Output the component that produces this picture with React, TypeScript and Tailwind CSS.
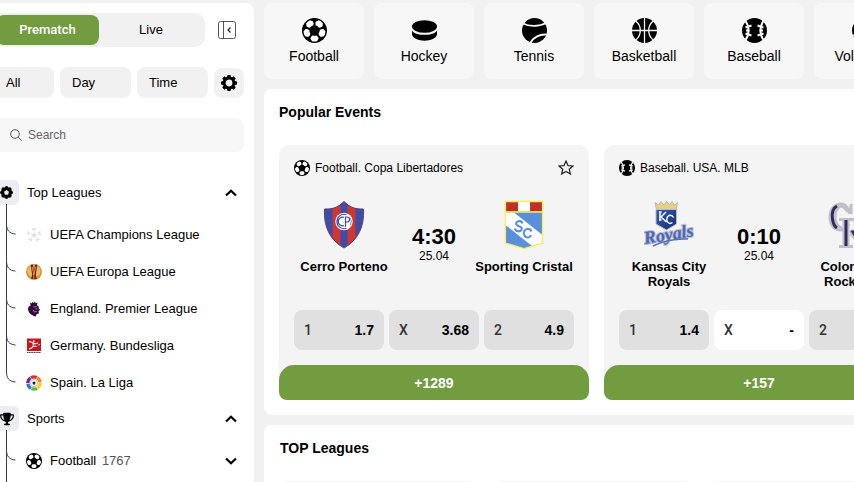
import type { ReactNode } from "react";
import { FaTrophy } from "react-icons/fa6";

type IconProps = { className?: string };

const fifths = [0, 72, 144, 216, 288];
const eighths = [0, 45, 90, 135, 180, 225, 270, 315];

function FootballIcon({ className = "size-[25px]" }: IconProps) {
  return (
    <svg viewBox="0 0 25 25" className={className} aria-hidden="true">
      <circle cx="12.5" cy="12.5" r="12.5" />
      {fifths.map((a) => (
        <path
          key={a}
          transform={`rotate(${a + 36} 12.5 12.5)`}
          d="M10 1.8Q12.5 1 15 1.8L16.6 4.4Q16.4 6.4 14.6 7.6Q12.5 7 10.4 7.6Q8.6 6.4 8.4 4.4Z"
          fill="#fff"
        />
      ))}
    </svg>
  );
}

function HockeyIcon({ className = "size-[25px]" }: IconProps) {
  return (
    <svg viewBox="0 0 25 25" className={className} aria-hidden="true">
      <ellipse cx="12.5" cy="8.5" rx="12.5" ry="6.3" />
      <path d="M0 12.4C1.500 15.400 6.500 16.800 12.500 16.800S23.500 15.400 25 12.400V16.500C24 20.500 18.500 22.700 12.500 22.700S1 20.500 0 16.500Z" />
    </svg>
  );
}

function TennisIcon({ className = "size-[25px]" }: IconProps) {
  return (
    <svg viewBox="0 0 25 25" className={className} aria-hidden="true">
      <circle cx="12.5" cy="12.5" r="12.5" />
      <path
        d="M1 5.500C7 8.800 18 8.500 24 5M8.500 25C10.500 20 17.500 15.800 25 16.600"
        fill="none"
        stroke="#f7f7f7"
        strokeWidth="1.8"
      />
    </svg>
  );
}

function BasketballIcon({ className = "size-[25px]" }: IconProps) {
  return (
    <svg viewBox="0 0 25 25" className={className} aria-hidden="true">
      <circle cx="12.5" cy="12.5" r="12.5" />
      <path
        d="M12.5 0V25M0 12.5H25M3.8 3C9.8 8 9.8 17 3.8 22M21.2 3C15.2 8 15.2 17 21.2 22"
        fill="none"
        stroke="#f7f7f7"
        strokeWidth="1.3"
      />
    </svg>
  );
}

function BaseballIcon({ className = "size-[25px]" }: IconProps) {
  return (
    <svg viewBox="0 0 25 25" className={className} aria-hidden="true">
      <circle cx="12.5" cy="12.5" r="12.5" />
      <g fill="none" stroke="#f7f7f7" strokeWidth="2">
        <path d="M3.5 3C7.500 8.500 7.500 16.500 3.500 22M21.500 3C17.500 8.500 17.500 16.500 21.500 22" />
        <path d="M3.500 9.500L9.500 7.500M4 12.500H7.500M3.500 15.500L9.500 17.500M21.500 9.500L15.500 7.500M21 12.500H17.500M21.500 15.500L15.500 17.500" />
      </g>
    </svg>
  );
}

function VolleyballIcon({ className = "size-[25px]" }: IconProps) {
  return (
    <svg viewBox="0 0 25 25" className={className} aria-hidden="true">
      <circle cx="12.5" cy="12.5" r="12.5" />
      <path
        d="M12.5 12.5C10 8 11 3 15 0M12.5 12.5C17.5 12.5 22 15 23.5 19M12.5 12.5C10 17 5 19 1 17"
        fill="none"
        stroke="#f7f7f7"
        strokeWidth="1.4"
      />
    </svg>
  );
}

function GearIcon() {
  return (
    <svg viewBox="0 0 16 16" className="size-4" aria-hidden="true">
      <circle cx="8" cy="8" r="4.9" fill="none" stroke="#000" strokeWidth="3" />
      {eighths.map((a) => (
        <rect key={a} x="6.2" y="0" width="3.6" height="3.5" rx="0.8" transform={`rotate(${a} 8 8)`} />
      ))}
    </svg>
  );
}

function BadgeIcon() {
  return (
    <svg viewBox="0 0 14 14" className="size-[13px]" aria-hidden="true">
      <circle cx="7" cy="7" r="5.8" />
      {eighths.map((a) => (
        <circle key={a} cx="7" cy="1.9" r="1.9" transform={`rotate(${a} 7 7)`} />
      ))}
      <path d="M7 4.2L9.7 6.2L8.7 9.4H5.3L4.3 6.2Z" fill="#ebedf2" />
    </svg>
  );
}

function Chevron({ down = false }: { down?: boolean }) {
  return (
    <svg viewBox="0 0 12 8" className="h-2 w-3" fill="none" stroke="#000" strokeWidth="2.2" aria-hidden="true">
      <path d={down ? "M1 1.500L6 6.300L11 1.500" : "M1 6.500L6 1.700L11 6.500"} />
    </svg>
  );
}

function ChampionsIcon() {
  return (
    <svg viewBox="0 0 16 16" className="size-4" fill="#dedede" aria-hidden="true">
      <path d="M8 5l.9 1.900 2.100.2-1.600 1.400.5 2.100L8 9.500l-1.900 1.100.5-2.100L5 7.100l2.100-.2z" />
      {fifths.map((a) => (
        <g key={a} transform={`rotate(${a} 8 8)`}>
          <path d="M5.700 .5L8 1.600L10.300 .5L9.300 2.500L10 3.300L8 2.900L6 3.300L6.700 2.500Z" />
          <path d="M7.700 3.300H8.300V5H7.700Z" />
        </g>
      ))}
    </svg>
  );
}

function EuropaIcon() {
  return (
    <svg viewBox="0 0 16 16" className="size-4" aria-hidden="true">
      <circle cx="8" cy="8" r="8" fill="#cf9a3c" />
      <path d="M1.500 6A7 7 0 0 1 5 2L6 13A7 7 0 0 1 1.500 6M14.500 6A7 7 0 0 0 11 2L10 13A7 7 0 0 0 14.500 6" fill="#e9bf66" />
      <path d="M4.800 .8L6.200 10.500L5.200 15H10.800L9.800 10.500L11.200 .8L9.300 .4L8 7L6.700 .4Z" fill="#7d1a12" />
      <path d="M6.300 3L7.800 11L9.700 3M7.800 11V15" fill="none" stroke="#e9c98a" strokeWidth=".7" />
    </svg>
  );
}

function PremierIcon() {
  return (
    <svg viewBox="0 0 16 16" className="size-4" aria-hidden="true">
      <path
        d="M4 1.800L5.600 2.500L6 .8L7.500 2L9 .5L9.700 2.200L11.500 1.500L11 4.300L13 5.700L12.500 7L14 8.800L12.500 10.500L13 12.500L10.800 13L9.500 15.700L6 14L3.500 12.300L2 9L2.300 6L4.500 4.400Z"
        fill="#38063f"
      />
      <path d="M7.500 6L10.500 5.500M9.500 7.700L11.500 8M7 9L8.500 11L10.800 10.500" fill="none" stroke="#fff" strokeWidth=".5" />
    </svg>
  );
}

function BundesligaIcon() {
  return (
    <svg viewBox="0 0 16 16" className="size-4" aria-hidden="true">
      <rect x="1" y="0.500" width="14" height="12.500" fill="#c4161c" />
      <path d="M3 3.500L6.500 4.500L9 6L12 5M7 5L7.500 8L11 8.500M7.500 8L5.500 10L3 11" fill="none" stroke="#fff" strokeWidth="1.100" />
      <circle cx="7.800" cy="3.200" r=".9" fill="#fff" />
      <circle cx="13" cy="6.800" r=".7" fill="#fff" />
      <path d="M1 14.500H15" stroke="#444" strokeWidth="1" strokeDasharray="1.300 .4" />
    </svg>
  );
}

const laLigaColors = ["#f58220", "#fcd116", "#5bb947", "#3f6fd1", "#6b2c91", "#e3263a"];

function LaLigaIcon() {
  return (
    <svg viewBox="0 0 16 16" className="size-4" aria-hidden="true">
      {laLigaColors.map((c, i) => (
        <path
          key={c}
          d="M8 1.800A6.200 6.200 0 0 1 13 4.500"
          fill="none"
          stroke={c}
          strokeWidth="3.3"
          transform={`rotate(${i * 60 + 30} 8 8)`}
        />
      ))}
      <circle cx="8" cy="8" r="3.600" fill="#fff" stroke="#777" strokeWidth=".5" />
      <path d="M8 6.300L9.600 7.500L9 9.400H7L6.400 7.500Z" fill="#222" />
    </svg>
  );
}

const cerroOutline = "M21 1.500L25 5Q31 9.500 40.500 9Q42 36 21 48Q0 36 1.500 9Q11 9.500 17 5Z";

function CerroCrest() {
  return (
    <svg viewBox="0 0 42 50" className="h-[50px] w-[42px]" aria-hidden="true">
      <defs>
        <clipPath id="cerro-shield">
          <path d={cerroOutline} />
        </clipPath>
      </defs>
      <g clipPath="url(#cerro-shield)">
        <path d="M0 0H42V50H0Z" fill="#3b4fa8" />
        <path d="M9.500 0H17.500V50H9.500ZM24.500 0H32.500V50H24.500Z" fill="#d0352f" />
      </g>
      <path d={cerroOutline} fill="none" stroke="#6b3a6e" strokeWidth="1" />
      <circle cx="21" cy="21.500" r="8.700" fill="#fff" />
      <g fill="none" stroke="#3b4fa8" strokeWidth="1.200">
        <path d="M23.500 14.700A7.200 7.200 0 1 0 23.500 28.300M21 17.300A4.400 4.400 0 1 0 21 25.700M22.500 27V17H24A2.500 2.500 0 0 1 24 22H22.500" />
        <path d="M27 17.500A7 7 0 0 1 27 25.500" strokeWidth=".7" />
      </g>
    </svg>
  );
}

function CristalCrest() {
  return (
    <svg viewBox="0 0 40 50" className="h-[50px] w-10" aria-hidden="true">
      <path d="M1.500 1.500H38.500V43L20 48.500L1.500 43Z" fill="#5a8fdc" />
      <path d="M1.500 12.500H10L38.500 35V43L28 46L1.500 25Z" fill="#fff" />
      <path d="M1.500 1.500H38.500V11.500H1.500Z" fill="#fff" />
      <path d="M1.500 1.500H14V11.500H1.500ZM26 1.500H38.500V11.500H26Z" fill="#c03028" />
      <path d="M1.500 1.500H38.500V43L20 48.500L1.500 43ZM1.500 12H38.500" fill="none" stroke="#f5ee4d" strokeWidth="1.3" />
      <g fill="none" stroke="#5a8fdc" strokeWidth="2.1">
        <path d="M18.500 23.500Q17.500 20.500 14.500 21.300Q11.300 22.200 12.500 24.700Q13.500 26 15.500 26.500Q18.700 27.500 17.500 30Q15.500 32.500 12 30.500Q11 29.700 11 28.500" />
        <path d="M27.500 31.500Q26 28.300 23 29Q19.500 30.300 20 34Q21 38 24.500 37.500Q26.500 37 27 35" />
      </g>
    </svg>
  );
}

function RoyalsCrest() {
  return (
    <svg viewBox="0 0 50 50" className="size-[50px]" aria-hidden="true">
      <defs>
        <linearGradient id="royals-blue" x1="0" y1="0" x2="1" y2="1">
          <stop offset="0" stopColor="#3459b4" />
          <stop offset="1" stopColor="#17306f" />
        </linearGradient>
      </defs>
      <path d="M11 2.500L14.500 5L17 1.500L20 5L22.500 1.500L25.500 5L28 1.500L30.500 5L33.500 2.500L32 10H12.500Z" fill="#e3d190" stroke="#b5a777" strokeWidth=".7" />
      <path d="M12 9.500H32.500V24L22.500 30L12 24Z" fill="url(#royals-blue)" stroke="#b9bcc8" />
      <path d="M16 12V20M15 12H17.500M15 20H17.500M22 12L17 17L22.500 22M29.500 17.500Q28 14.500 25 15.500Q22 17.500 23 21Q25 25 28.500 22.500" fill="none" stroke="#fff" strokeWidth="1.5" />
      <g transform="rotate(-9 1 45)" fontSize="18" fontStyle="italic" fontWeight="700" fontFamily="Liberation Serif, serif" strokeLinejoin="round">
        <text x="1" y="44" fill="#4a66b8" stroke="#b7bccd" strokeWidth="2.2" paintOrder="stroke">
          Royals
        </text>
      </g>
      <path d="M9 46Q25 38 44 39" fill="none" stroke="#5a70ad" strokeWidth="1.5" />
    </svg>
  );
}

function RockiesCrest() {
  return (
    <svg viewBox="0 0 50 50" className="size-[50px]" aria-hidden="true">
      <g fill="none" stroke="#bfc1ca" strokeWidth="3">
        <path d="M26 14Q23 3 16 4Q6 6 6 18Q7 30 17 30Q22 30 25 24M27 4V14" />
        <path d="M24 12Q20 6 16 6Q11 9 11 18Q12 27 18 28" />
      </g>
      <path d="M13 6Q7 9 8.500 19Q9.500 26 13 28" fill="none" stroke="#36285f" strokeWidth="3" />
      <g fill="none" stroke="#bfc1ca" strokeWidth="7">
        <path d="M22 19V45M29 33L37 43" />
        <path d="M15 46.500H29M34 46.500H43M15 19.500H31" strokeWidth="3" />
        <path d="M30 20Q38 21 37 27Q36 32 26 33" strokeWidth="6" />
      </g>
      <path d="M22 20V46M31 21Q37 22 36 27Q35 31 29 32L37 44" fill="none" stroke="#36285f" strokeWidth="3" />
    </svg>
  );
}

function SidebarHeading({ icon, label }: { icon: ReactNode; label: string }) {
  return (
    <button type="button" className="flex h-[25px] w-full items-center gap-2 pr-[7px] text-left">
      <span className="flex size-[25px] items-center justify-center rounded-[5px] bg-[#ebedf2]">{icon}</span>
      <span className="flex-1">{label}</span>
      <Chevron />
    </button>
  );
}

function Branch({ last = false, first = false }: { last?: boolean; first?: boolean }) {
  const top = first ? -12 : 0;
  return (
    <svg viewBox="0 0 32 37" className="h-[37px] w-8 overflow-visible" fill="none" stroke="#363b52" aria-hidden="true">
      <path d={last ? `M12.500 ${top}V8` : `M12.500 ${top}V37`} />
      <path d="M12.500 8C12.500 14 15 17.500 21.500 18" />
    </svg>
  );
}

const leagues = [
  { name: "UEFA Champions League", icon: <ChampionsIcon /> },
  { name: "UEFA Europa League", icon: <EuropaIcon /> },
  { name: "England. Premier League", icon: <PremierIcon /> },
  { name: "Germany. Bundesliga", icon: <BundesligaIcon /> },
  { name: "Spain. La Liga", icon: <LaLigaIcon /> },
];

function Sidebar() {
  return (
    <aside className="-ml-4 mt-[3px] w-[270px] shrink-0 rounded-tr-lg bg-white px-[10px] pt-[10px] text-[13px] leading-4">
      <div className="flex items-center justify-between pr-2">
        <div className="flex h-[34px] w-[211px] rounded-[10px] bg-[#f1f1f1] p-[2px]">
          <button type="button" className="w-[103px] rounded-lg bg-[#729c40] font-['Roboto',sans-serif] font-medium text-white">
            Prematch
          </button>
          <button type="button" className="flex-1">
            Live
          </button>
        </div>
        <button type="button" aria-label="Collapse menu">
          <svg viewBox="0 0 18 18" className="size-[18px]" fill="none" stroke="#555" aria-hidden="true">
            <rect x=".5" y=".5" width="17" height="17" rx="2" />
            <path d="M5.500 .5V17.500" />
            <path d="M12.500 6.500L10 9L12.500 11.500" stroke="#222" strokeWidth="1.2" />
          </svg>
        </button>
      </div>

      <div className="mt-5 flex items-end gap-[6px]">
        <button type="button" className="h-[31px] w-[60px] rounded-lg bg-[#f1f1f1] pl-3 text-left">All</button>
        <button type="button" className="h-[31px] flex-1 rounded-lg bg-[#f1f1f1] pl-3 text-left">Day</button>
        <button type="button" className="h-[31px] flex-1 rounded-lg bg-[#f1f1f1] pl-3 text-left">Time</button>
        <button type="button" aria-label="Settings" className="flex size-[30px] items-center justify-center rounded-lg bg-[#f1f1f1]">
          <GearIcon />
        </button>
      </div>

      <label className="mt-5 flex h-[34px] items-center gap-[6px] rounded-lg bg-[#f7f7f7] pl-4 text-xs">
        <svg viewBox="0 0 12 12" className="size-3" fill="none" stroke="#555" aria-hidden="true">
          <circle cx="5" cy="5" r="4.3" />
          <path d="M8 8L11.700 11.700" />
        </svg>
        <input type="search" aria-label="Search" placeholder="Search" className="min-w-0 flex-1 bg-transparent outline-none placeholder:text-[#666]" />
      </label>

      <nav className="mt-7">
        <SidebarHeading icon={<BadgeIcon />} label="Top Leagues" />
        <ul className="mb-[5px] mt-[11px]">
          {leagues.map((l, i) => (
            <li key={l.name}>
              <a href="#league" className="flex h-[37px] items-center">
                <Branch first={i === 0} last={i === leagues.length - 1} />
                {l.icon}
                <span className="pl-2">{l.name}</span>
              </a>
            </li>
          ))}
        </ul>
        <SidebarHeading icon={<FaTrophy className="size-[14px]" />} label="Sports" />
        <ul className="mt-[11px]">
          <li>
            <button type="button" className="flex h-[37px] w-full items-center pr-[7px] text-left">
              <Branch first />
              <FootballIcon className="size-4" />
              <span className="flex-1 pl-2">
                Football <span className="pl-[2px] text-[#555]">1767</span>
              </span>
              <Chevron down />
            </button>
          </li>
          <li>
            <button type="button" aria-label="Next sport" className="flex h-[37px] items-center">
              <Branch />
            </button>
          </li>
        </ul>
      </nav>
    </aside>
  );
}

const sports = [
  { name: "Football", icon: <FootballIcon /> },
  { name: "Hockey", icon: <HockeyIcon /> },
  { name: "Tennis", icon: <TennisIcon /> },
  { name: "Basketball", icon: <BasketballIcon /> },
  { name: "Baseball", icon: <BaseballIcon /> },
  { name: "Volleyball", icon: <VolleyballIcon /> },
];

type EventData = {
  title: string;
  icon: ReactNode;
  time: string;
  date: string;
  home: { name: string; crest: ReactNode };
  away: { name: string; crest: ReactNode };
  odds: { label: string; value: string }[];
  more: string;
};

const events: EventData[] = [
  {
    title: "Football. Copa Libertadores",
    icon: <FootballIcon className="size-4" />,
    time: "4:30",
    date: "25.04",
    home: { name: "Cerro Porteno", crest: <CerroCrest /> },
    away: { name: "Sporting Cristal", crest: <CristalCrest /> },
    odds: [
      { label: "1", value: "1.7" },
      { label: "X", value: "3.68" },
      { label: "2", value: "4.9" },
    ],
    more: "+1289",
  },
  {
    title: "Baseball. USA. MLB",
    icon: <BaseballIcon className="size-4" />,
    time: "0:10",
    date: "25.04",
    home: { name: "Kansas City Royals", crest: <RoyalsCrest /> },
    away: { name: "Colorado Rockies", crest: <RockiesCrest /> },
    odds: [
      { label: "1", value: "1.4" },
      { label: "X", value: "-" },
      { label: "2", value: "2.9" },
    ],
    more: "+157",
  },
];

function Team({ name, crest }: { name: string; crest: ReactNode }) {
  return (
    <div className="flex w-[100px] flex-col items-center gap-[9px]">
      {crest}
      <span className="text-center text-[13px] font-bold leading-[15px]">{name}</span>
    </div>
  );
}

function EventCard({ event }: { event: EventData }) {
  return (
    <article className="w-[310px] shrink-0 rounded-[10px] bg-[#f4f4f4]">
      <div className="p-[15px]">
        <header className="flex h-4 items-center gap-[5px] text-xs">
          {event.icon}
          <h3 className="flex-1">{event.title}</h3>
          <button type="button" aria-label="Add to favourites">
            <svg viewBox="0 0 16 16" className="size-4" fill="none" stroke="#222" strokeWidth="1.2" aria-hidden="true">
              <path d="M8 1L10 5.600L15 6L11.200 9.200L12.400 14.100L8 11.500L3.600 14.100L4.800 9.200L1 6L6 5.600Z" />
            </svg>
          </button>
        </header>
        <div className="mt-6 flex h-[95px] justify-between">
          <Team {...event.home} />
          <div className="flex flex-1 flex-col items-center pt-[25px]">
            <span className="text-[22px] font-bold leading-6">{event.time}</span>
            <span className="text-xs leading-[14px]">{event.date}</span>
          </div>
          <Team {...event.away} />
        </div>
        <div className="mt-[15px] grid grid-cols-3 gap-[5px]">
          {event.odds.map((o) => (
            <button
              key={o.label}
              type="button"
              className={`flex h-10 items-center justify-between rounded-lg px-[10px] text-sm ${o.value === "-" ? "bg-white" : "bg-[#e0e0e0]"}`}
            >
              <span className="font-['Roboto',sans-serif] font-medium text-[#333]">{o.label}</span>
              <span className="font-bold">{o.value}</span>
            </button>
          ))}
        </div>
      </div>
      <button type="button" className="h-[35px] w-full rounded-b-lg rounded-t-[15px] bg-[#729c40] text-sm font-bold text-white">
        {event.more}
      </button>
    </article>
  );
}

export default function App() {
  return (
    <div className="flex h-screen gap-[10px] overflow-hidden bg-[#f1f1f1] font-['Liberation_Sans',Arial,sans-serif] text-black">
      <Sidebar />
      <main className="min-w-0 flex-1 pt-[3px]">
        <nav className="flex gap-[10px] overflow-hidden">
          {sports.map((s) => (
            <a
              key={s.name}
              href="#sport"
              className="flex h-[76px] w-[100px] shrink-0 flex-col items-center gap-[3px] rounded-lg bg-[#f7f7f7] pt-[15px] text-sm"
            >
              {s.icon}
              {s.name}
            </a>
          ))}
        </nav>

        <section className="mt-[10px] overflow-hidden rounded-l-lg bg-white p-[15px]">
          <h2 className="text-sm font-bold leading-4">Popular Events</h2>
          <div className="mt-[25px] flex gap-[15px]">
            {events.map((e) => (
              <EventCard key={e.title} event={e} />
            ))}
          </div>
        </section>

        <section className="mt-[10px] overflow-hidden rounded-l-lg bg-white p-[15px]">
          <h2 className="pl-px text-sm font-bold leading-4">TOP Leagues</h2>
          <div className="mt-[25px] flex gap-[15px]">
            {["a", "b", "c"].map((k) => (
              <div key={k} className="h-24 w-[200px] shrink-0 rounded-[10px] bg-[#f4f4f4]" />
            ))}
          </div>
        </section>
      </main>
    </div>
  );
}
